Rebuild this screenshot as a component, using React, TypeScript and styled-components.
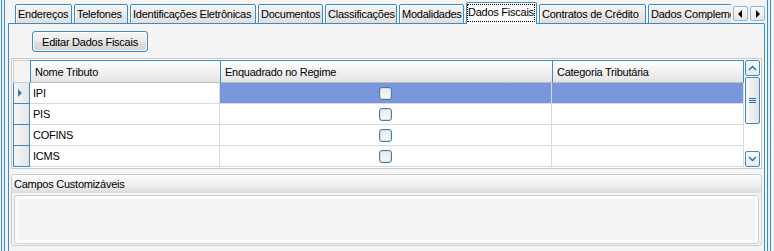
import React from 'react';
import styled, { createGlobalStyle } from 'styled-components';

const GlobalStyle = createGlobalStyle`
  html, body {
    margin: 0;
    padding: 0;
    background: #f0f0f0;
  }
  body {
    font-family: 'Liberation Sans', Arial, sans-serif;
    font-size: 11px;
    letter-spacing: -0.25px;
    color: #000;
  }
`;

const BLUE = '#3b8bc7';

const Window = styled.div`
  width: 774px;
  height: 251px;
  display: flex;
  background: #f4f4f4;
  overflow: hidden;
`;

const Edge = styled.div<{ $left?: boolean }>`
  width: 2px;
  margin-left: 1px;
  margin-right: ${(p) => (p.$left ? '1px' : '3px')};
  border-left: 1px solid ${BLUE};
  border-right: 1px solid ${BLUE};
  background: #e8f1f8;
  flex-shrink: 0;
`;

const Content = styled.div`
  width: 760px;
  display: flex;
  flex-direction: column;
  flex-shrink: 0;
`;

const TabStrip = styled.div`
  height: 24px;
  display: flex;
  align-items: flex-end;
  position: relative;
  z-index: 2;
`;

const TabList = styled.div`
  flex: 1;
  display: flex;
  gap: 2px;
  padding-left: 9px;
  overflow: hidden;
  height: 24px;
  align-items: flex-end;
`;

const Tab = styled.div<{ $w: number; $active?: boolean }>`
  flex-shrink: 0;
  box-sizing: border-box;
  width: ${(p) => p.$w}px;
  height: ${(p) => (p.$active ? 23 : 20)}px;
  margin-bottom: ${(p) => (p.$active ? -1 : 0)}px;
  border: 1px solid ${BLUE};
  border-bottom: ${(p) => (p.$active ? 'none' : `1px solid ${BLUE}`)};
  border-radius: 2px 2px 0 0;
  background: ${(p) =>
    p.$active ? '#ffffff' : 'linear-gradient(#f4f4f4, #e9e9e9 50%, #dedede)'};
  box-shadow: inset 1px 1px 0 #ffffff;
  display: flex;
  align-items: ${(p) => (p.$active ? 'flex-start' : 'center')};
  padding: ${(p) => (p.$active ? '2px 1px 0' : '0 2px')};
  white-space: nowrap;
  overflow: hidden;
`;

const Focus = styled.span`
  outline: 1px dotted #000;
  padding: 1px 0 2px;
  line-height: 13px;
`;

const ArrowBox = styled.div`
  display: flex;
  gap: 2px;
  padding: 0 0 3px 2px;
  margin-right: 1px;
`;

const ArrowButton = styled.div`
  width: 15px;
  height: 15px;
  box-sizing: border-box;
  border: 1px solid #8bb6da;
  border-radius: 2px;
  background: linear-gradient(#fbfbfb, #e6e6e6);
  display: flex;
  align-items: center;
  justify-content: center;
`;

const Panel = styled.div`
  flex: 1;
  margin: -1px 1px 0 2px;
  border: 1px solid ${BLUE};
  border-bottom: none;
  border-radius: 0 2px 0 0;
  background: #f4f4f4;
  padding: 7px 2px 0 2px;
  display: flex;
  flex-direction: column;
`;

const Toolbar = styled.div`
  display: flex;
  padding-left: 21px;
  height: 20px;
  margin-bottom: 7px;
`;

const Button = styled.div`
  box-sizing: border-box;
  width: 116px;
  height: 21px;
  border: 1px solid ${BLUE};
  border-radius: 3px;
  background: linear-gradient(#f3f3f3, #ebebeb 50%, #dddddd 51%, #d4d4d4);
  box-shadow: inset 1px 1px 0 #fff, inset -1px -1px 0 #f3f3f3;
  display: flex;
  align-items: center;
  justify-content: center;
`;

const GridFrame = styled.div`
  border: 1px solid #c9c9c9;
  padding: 1px;
  display: flex;
  background: #fff;
`;

const Grid = styled.div`
  flex: 1;
  display: grid;
  grid-template-columns: 17px 190px 332px 192px;
  grid-template-rows: 23px repeat(4, 21px);
`;

const HeaderCell = styled.div<{ $corner?: boolean; $last?: boolean }>`
  box-sizing: border-box;
  border: 1px solid ${BLUE};
  border-right: ${(p) => (p.$last ? `1px solid ${BLUE}` : 'none')};
  border-bottom-color: #bcbcbc;
  background: linear-gradient(#ffffff, #f1f1f1 50%, #e4e4e4);
  display: flex;
  align-items: center;
  padding-left: 4px;
  white-space: nowrap;
  ${(p) => (p.$corner ? `border-color: #cfcfcf; background: #f4f4f4;` : '')}
`;

const RowHead = styled.div`
  box-sizing: border-box;
  border: 1px solid ${BLUE};
  border-top: none;
  background: linear-gradient(90deg, #f7f7f7, #e4e4e4);
  display: flex;
  align-items: center;
  padding-left: 4px;
`;

const Cell = styled.div<{ $sel?: boolean; $center?: boolean }>`
  box-sizing: border-box;
  border-right: 1px solid #dadada;
  border-bottom: 1px solid #dadada;
  background: ${(p) => (p.$sel ? '#7a97de' : '#ffffff')};
  display: flex;
  align-items: center;
  justify-content: ${(p) => (p.$center ? 'center' : 'flex-start')};
  padding-left: ${(p) => (p.$center ? 0 : 3)}px;
`;

const Check = styled.div`
  width: 13px;
  height: 13px;
  box-sizing: border-box;
  border: 1px solid #3c7fb1;
  border-radius: 3px;
  background: linear-gradient(#eaeaea, #f8f8f8);
  box-shadow: inset 0 0 0 1px #dcdcdc;
`;

const ScrollBar = styled.div`
  width: 17px;
  display: flex;
  flex-direction: column;
  background: #fff;
  padding-left: 1px;
  box-sizing: border-box;
`;

const ScrollBtn = styled.div`
  height: 16px;
  box-sizing: border-box;
  border: 1px solid ${BLUE};
  border-radius: 2px;
  background: linear-gradient(#fbfbfb, #e9e9e9);
  display: flex;
  align-items: center;
  justify-content: center;
`;

const Thumb = styled.div`
  height: 47px;
  box-sizing: border-box;
  border: 1px solid ${BLUE};
  border-radius: 2px;
  background: linear-gradient(90deg, #fafafa, #e2e2e2);
  display: flex;
  align-items: center;
  justify-content: center;
  margin-top: 1px;
`;

const Track = styled.div`
  flex: 1;
`;

const Group = styled.div`
  margin-top: 5px;
  border: 1px solid #d0d0d0;
  border-radius: 3px;
  height: 70px;
  display: flex;
  flex-direction: column;
  background: #f4f4f4;
`;

const GroupHeader = styled.div`
  height: 18px;
  background: linear-gradient(#fdfdfd, #efefef 55%, #dcdcdc);
  display: flex;
  align-items: center;
  padding-left: 2px;
  border-radius: 3px 3px 0 0;
`;

const GroupBody = styled.div`
  flex: 1;
  margin: 2px 2px 1px 2px;
  border: 1px solid #d0d0d0;
  border-radius: 3px;
  padding: 3px;
  background: #fcfcfc;
`;

const GroupInner = styled.div`
  height: 100%;
  background: #f4f4f4;
`;

const tabs = [
  { label: 'Endereços', w: 57 },
  { label: 'Telefones', w: 54 },
  { label: 'Identificações Eletrônicas', w: 126 },
  { label: 'Documentos', w: 65 },
  { label: 'Classificações', w: 72 },
  { label: 'Modalidades', w: 65 },
  { label: 'Dados Fiscais', w: 71, active: true },
  { label: 'Contratos de Crédito', w: 107 },
  { label: 'Dados Complementares', w: 120 },
];

const rows = ['IPI', 'PIS', 'COFINS', 'ICMS'];

const App = () => {
  return (
    <>
      <GlobalStyle />
      <Window>
        <Edge $left />
        <Content>
          <TabStrip>
            <TabList>
              {tabs.map((t) => (
                <Tab key={t.label} $w={t.w} $active={t.active}>
                  {t.active ? <Focus>{t.label}</Focus> : t.label}
                </Tab>
              ))}
            </TabList>
            <ArrowBox>
              <ArrowButton>
                <svg width="5" height="8" viewBox="0 0 5 8">
                  <path d="M4 0 L0 4 L4 8 Z" fill="#000" />
                </svg>
              </ArrowButton>
              <ArrowButton>
                <svg width="5" height="8" viewBox="0 0 5 8">
                  <path d="M1 0 L5 4 L1 8 Z" fill="#000" />
                </svg>
              </ArrowButton>
            </ArrowBox>
          </TabStrip>
          <Panel>
            <Toolbar>
              <Button>Editar Dados Fiscais</Button>
            </Toolbar>
            <GridFrame>
              <Grid>
                <HeaderCell $corner />
                <HeaderCell>Nome Tributo</HeaderCell>
                <HeaderCell>Enquadrado no Regime</HeaderCell>
                <HeaderCell $last>Categoria Tributária</HeaderCell>
                {rows.map((r, i) => (
                  <React.Fragment key={r}>
                    <RowHead>
                      {i === 0 && (
                        <svg width="4" height="8" viewBox="0 0 4 8">
                          <path d="M0 0 L4 4 L0 8 Z" fill="#2d7fc0" />
                        </svg>
                      )}
                    </RowHead>
                    <Cell>{r}</Cell>
                    <Cell $sel={i === 0} $center>
                      <Check />
                    </Cell>
                    <Cell $sel={i === 0} />
                  </React.Fragment>
                ))}
              </Grid>
              <ScrollBar>
                <ScrollBtn>
                  <svg width="9" height="6" viewBox="0 0 9 6">
                    <path d="M1 5 L4.5 1.5 L8 5" stroke="#1a6fb3" strokeWidth="1.4" fill="none" />
                  </svg>
                </ScrollBtn>
                <Thumb>
                  <svg width="7" height="6" viewBox="0 0 7 6">
                    <path d="M0 0.5 H7 M0 2.5 H7 M0 4.5 H7" stroke="#1a6fb3" strokeWidth="1" />
                  </svg>
                </Thumb>
                <Track />
                <ScrollBtn>
                  <svg width="9" height="6" viewBox="0 0 9 6">
                    <path d="M1 1 L4.5 4.5 L8 1" stroke="#1a6fb3" strokeWidth="1.4" fill="none" />
                  </svg>
                </ScrollBtn>
              </ScrollBar>
            </GridFrame>
            <Group>
              <GroupHeader>Campos Customizáveis</GroupHeader>
              <GroupBody>
                <GroupInner />
              </GroupBody>
            </Group>
          </Panel>
        </Content>
        <Edge />
      </Window>
    </>
  );
};

export default App;
